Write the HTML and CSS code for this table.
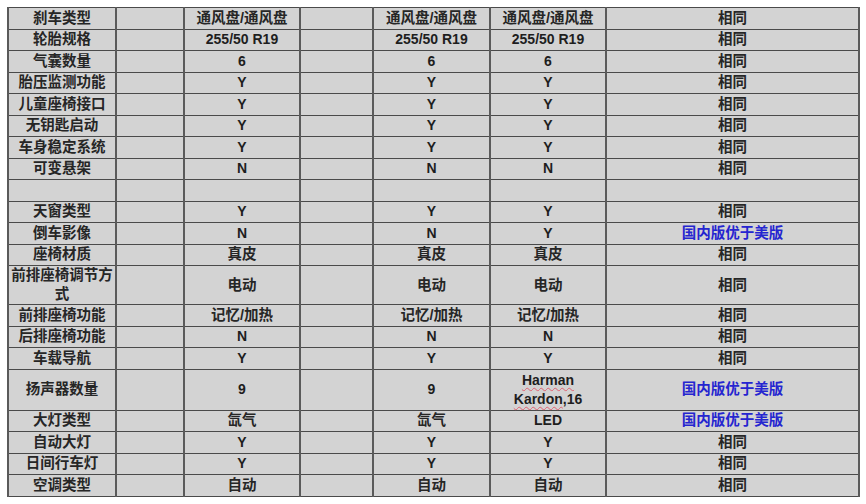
FILE: index.html
```html
<!DOCTYPE html>
<html lang="zh">
<head>
<meta charset="utf-8">
<title>配置对比</title>
<link rel="stylesheet" href="styles.css">
</head>
<body>
<table class="spec">
<colgroup>
<col class="c1"><col class="c2"><col class="c3"><col class="c4"><col class="c5"><col class="c6"><col class="c7">
</colgroup>
<tbody>
<tr><td>刹车类型</td><td></td><td>通风盘/通风盘</td><td></td><td>通风盘/通风盘</td><td>通风盘/通风盘</td><td>相同</td></tr>
<tr><td>轮胎规格</td><td></td><td class="lat">255/50 R19</td><td></td><td class="lat">255/50 R19</td><td class="lat">255/50 R19</td><td>相同</td></tr>
<tr><td>气囊数量</td><td></td><td class="lat">6</td><td></td><td class="lat">6</td><td class="lat">6</td><td>相同</td></tr>
<tr><td>胎压监测功能</td><td></td><td class="lat">Y</td><td></td><td class="lat">Y</td><td class="lat">Y</td><td>相同</td></tr>
<tr><td>儿童座椅接口</td><td></td><td class="lat">Y</td><td></td><td class="lat">Y</td><td class="lat">Y</td><td>相同</td></tr>
<tr><td>无钥匙启动</td><td></td><td class="lat">Y</td><td></td><td class="lat">Y</td><td class="lat">Y</td><td>相同</td></tr>
<tr><td>车身稳定系统</td><td></td><td class="lat">Y</td><td></td><td class="lat">Y</td><td class="lat">Y</td><td>相同</td></tr>
<tr><td>可变悬架</td><td></td><td class="lat">N</td><td></td><td class="lat">N</td><td class="lat">N</td><td>相同</td></tr>
<tr><td></td><td></td><td></td><td></td><td></td><td></td><td></td></tr>
<tr><td>天窗类型</td><td></td><td class="lat">Y</td><td></td><td class="lat">Y</td><td class="lat">Y</td><td>相同</td></tr>
<tr><td>倒车影像</td><td></td><td class="lat">N</td><td></td><td class="lat">N</td><td class="lat">Y</td><td class="blue">国内版优于美版</td></tr>
<tr><td>座椅材质</td><td></td><td>真皮</td><td></td><td>真皮</td><td>真皮</td><td>相同</td></tr>
<tr class="tall"><td>前排座椅调节方式</td><td></td><td>电动</td><td></td><td>电动</td><td>电动</td><td>相同</td></tr>
<tr><td>前排座椅功能</td><td></td><td>记忆/加热</td><td></td><td>记忆/加热</td><td>记忆/加热</td><td>相同</td></tr>
<tr><td>后排座椅功能</td><td></td><td class="lat">N</td><td></td><td class="lat">N</td><td class="lat">N</td><td>相同</td></tr>
<tr><td>车载导航</td><td></td><td class="lat">Y</td><td></td><td class="lat">Y</td><td class="lat">Y</td><td>相同</td></tr>
<tr class="taller"><td>扬声器数量</td><td></td><td class="lat">9</td><td></td><td class="lat">9</td><td class="lat"><span class="sp">Harman</span> <span class="sp">Kardon</span>,16</td><td class="blue">国内版优于美版</td></tr>
<tr><td>大灯类型</td><td></td><td>氙气</td><td></td><td>氙气</td><td class="lat">LED</td><td class="blue">国内版优于美版</td></tr>
<tr><td>自动大灯</td><td></td><td class="lat">Y</td><td></td><td class="lat">Y</td><td class="lat">Y</td><td>相同</td></tr>
<tr><td>日间行车灯</td><td></td><td class="lat">Y</td><td></td><td class="lat">Y</td><td class="lat">Y</td><td>相同</td></tr>
<tr><td>空调类型</td><td></td><td>自动</td><td></td><td>自动</td><td>自动</td><td>相同</td></tr>
</tbody>
</table>
</body>
</html>
```

FILE: styles.css
```css
html, body {
  margin: 0;
  padding: 0;
  background: #ffffff;
}

body {
  padding: 7px;
  font-family: "Liberation Sans", "Noto Sans CJK SC", sans-serif;
}

.spec {
  border-collapse: collapse;
  table-layout: fixed;
  width: 851px;
  background: #d3d3d3;
  border: 1px solid #555;
}

.c1 { width: 108px; }
.c2 { width: 68px; }
.c3 { width: 116px; }
.c4 { width: 73px; }
.c5 { width: 117px; }
.c6 { width: 116px; }
.c7 { width: 253px; }

.spec td {
  height: 20.5px;
  padding: 0 1px;
  border-top: 1px solid #4a4a4a;
  border-bottom: 1px solid #4a4a4a;
  border-left: 2px solid #5a5a5a;
  border-right: 2px solid #5a5a5a;
  text-align: center;
  vertical-align: middle;
  font-size: 14.5px;
  font-weight: bold;
  line-height: 19px;
  color: #262626;
}

.spec td.lat {
  font-size: 14px;
  color: #1e1e1e;
}

.spec .tall td {
  height: 38px;
}

.spec .taller td {
  height: 40px;
}

.spec td.blue {
  color: #2525d0;
}

.sp {
  text-decoration: underline wavy #e06070;
  text-decoration-thickness: 1px;
  text-underline-offset: 2px;
}
```
